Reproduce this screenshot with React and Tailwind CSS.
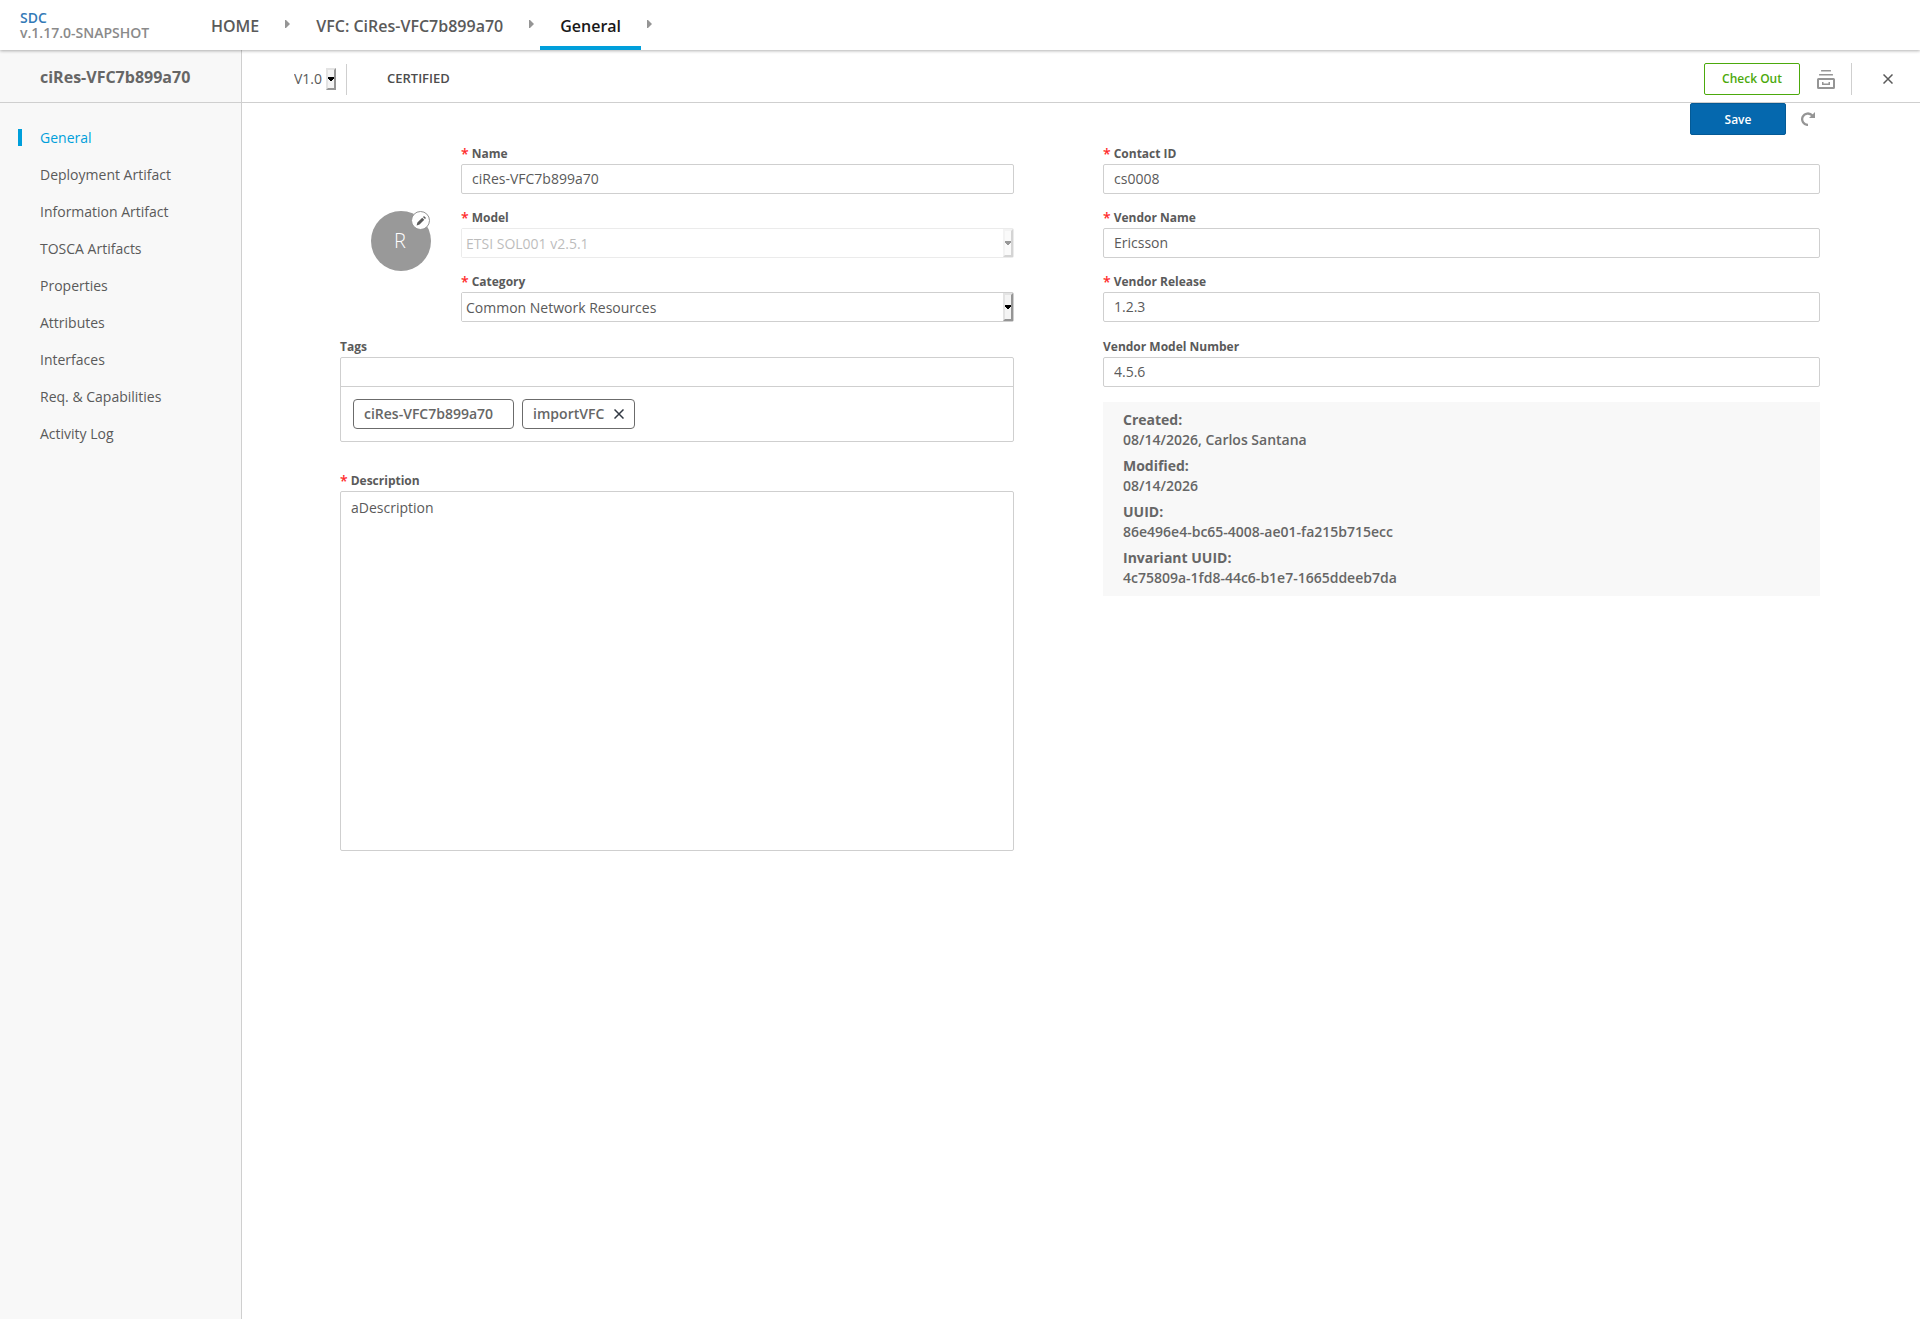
import React from "react";

const MENU = [
  "General",
  "Deployment Artifact",
  "Information Artifact",
  "TOSCA Artifacts",
  "Properties",
  "Attributes",
  "Interfaces",
  "Req. & Capabilities",
  "Activity Log",
];

const INFO = [
  ["Created:", "08/14/2026, Carlos Santana"],
  ["Modified:", "08/14/2026"],
  ["UUID:", "86e496e4-bc65-4008-ae01-fa215b715ecc"],
  ["Invariant UUID:", "4c75809a-1fd8-44c6-b1e7-1665ddeeb7da"],
];

function Arrow() {
  return (
    <svg viewBox="0 0 5 8" className="mx-1.5 mt-5 h-2 w-[5px] shrink-0" aria-hidden="true">
      <path d="M0 0h1l4 4-4 4H0z" fill="#959595" />
    </svg>
  );
}

function Crumb({ active, children }) {
  return (
    <>
      <a
        href="#"
        className={
          active
            ? "h-full border-b-4 border-[#009fdb] px-5 pt-[15px] text-[#191919]"
            : "h-full border-b-4 border-transparent px-5 pt-[15px] text-[#5a5a5a]"
        }
      >
        {children}
      </a>
      <Arrow />
    </>
  );
}

function Label({ id, required, children }) {
  return (
    <label htmlFor={id} className="flex h-[22px] items-center gap-[3px] pt-0.5 text-xs font-bold text-[#5a5a5a]">
      {required && <span className="text-sm leading-4 font-semibold text-[#ff2b2b]">*</span>}
      {children}
    </label>
  );
}

function TextField({ id, label, value, required = true }) {
  return (
    <div>
      <Label id={id} required={required}>{label}</Label>
      <input
        id={id}
        type="text"
        defaultValue={value}
        className="block h-[30px] w-full rounded-xs border border-[#cfcfcf] bg-white px-2.5 pb-0.5 text-sm text-[#5a5a5a]"
      />
    </div>
  );
}

function DropButton() {
  return (
    <span
      aria-hidden="true"
      className="pointer-events-none absolute inset-y-0 right-0 flex w-2.5 items-center justify-center border-2 border-t-[#e3e3e3] border-r-[#959595] border-b-[#959595] border-l-[#e3e3e3] bg-[#f4f4f4]"
    >
      <svg viewBox="0 0 6 4" className="h-1 w-1.5 shrink-0" shapeRendering="crispEdges">
        <path d="M0 0h6v2H5v1H4v1H2V3H1V2H0z" fill="#000" />
      </svg>
    </span>
  );
}

function SelectField({ id, label, value, disabled }) {
  return (
    <div>
      <Label id={id} required>{label}</Label>
      <div
        className={
          disabled
            ? "relative h-[30px] rounded-xs border border-[#cfcfcf] opacity-40"
            : "relative h-[30px] rounded-xs border border-[#cfcfcf]"
        }
      >
        <select
          id={id}
          disabled={disabled}
          className="block h-full w-full appearance-none bg-white pt-0.5 pr-3 pl-1 text-sm text-[#5a5a5a] opacity-100"
        >
          <option>{value}</option>
        </select>
        <DropButton />
      </div>
    </div>
  );
}

function Cross({ className }) {
  return (
    <svg viewBox="0 0 10 10" className={className} aria-hidden="true">
      <path d="M.5.5l9 9M9.5.5l-9 9" stroke="currentColor" strokeWidth="1.5" fill="none" />
    </svg>
  );
}

function Header() {
  return (
    <header className="relative z-10 flex h-[50px] shrink-0 bg-white shadow-[0_1px_3px_rgba(0,0,0,0.3)]">
      <div className="w-[191px] shrink-0 pt-2.5 pl-5 text-sm leading-[15px] font-semibold">
        <a href="#" className="block text-[#337ab7]">SDC</a>
        <div className="text-[#8a8a8a]">v.1.17.0-SNAPSHOT</div>
      </div>
      <nav className="flex text-base leading-[22px] font-semibold">
        <Crumb>HOME</Crumb>
        <Crumb>VFC: CiRes-VFC7b899a70</Crumb>
        <Crumb active>General</Crumb>
      </nav>
    </header>
  );
}

function Sidebar() {
  return (
    <aside className="w-[242px] shrink-0 border-r border-[#cfcfcf] bg-[#f8f8f8]">
      <h1 className="flex h-[53px] items-center border-b border-[#cfcfcf] pt-0.5 pl-10 text-base font-bold text-[#666666]">
        ciRes-VFC7b899a70
      </h1>
      <nav className="pt-4 text-sm">
        {MENU.map((m, i) => (
          <a
            key={m}
            href="#"
            className={
              i === 0
                ? "flex h-[37px] items-center pl-[18px] text-[#009fdb]"
                : "flex h-[37px] items-center pl-[18px] text-[#5a5a5a]"
            }
          >
            <span className={i === 0 ? "mr-[18px] h-[17px] w-1 bg-[#009fdb]" : "mr-[18px] h-[17px] w-1"} />
            {m}
          </a>
        ))}
      </nav>
    </aside>
  );
}

function Toolbar() {
  return (
    <div className="flex h-[53px] items-center border-b border-[#cfcfcf] pt-1.5 pr-[27px] pl-[52px]">
      <div className="relative h-[22px] w-[42px]">
        <select aria-label="Version" className="block h-full w-full appearance-none bg-white text-sm leading-[22px] text-[#5a5a5a]">
          <option>V1.0</option>
        </select>
        <DropButton />
      </div>
      <div className="ml-2.5 h-[31px] w-px bg-[#cfcfcf]" />
      <div className="ml-10 text-[13px] font-semibold text-[#4d4d4d]">CERTIFIED</div>
      <button type="button" className="ml-auto h-8 w-24 rounded-xs border border-[#4ca90c] text-xs font-semibold text-[#4ca90c]">
        Check Out
      </button>
      <button type="button" aria-label="Archive" className="ml-[17px] text-[#959595]">
        <svg viewBox="0 0 18 19" className="block h-[19px] w-[18px]" fill="currentColor">
          <rect x="4" y="0" width="10" height="1.600" rx=".5" />
          <rect x="2" y="4" width="14" height="1.600" rx=".5" />
          <rect x="1" y="9" width="16" height="9" rx=".5" fill="none" stroke="currentColor" strokeWidth="2" />
          <path d="M5 12h1.500v1.500h5V12H13v3H5z" />
        </svg>
      </button>
      <div className="ml-4 h-8 w-px bg-[#cfcfcf]" />
      <button type="button" aria-label="Close" className="ml-[31px] text-[#5a5a5a]">
        <Cross className="block h-2.5 w-2.5" />
      </button>
    </div>
  );
}

function Tag({ children, removable }) {
  return (
    <span className="flex h-[30px] items-center rounded border border-[#6b6b6b] px-2.5 text-sm font-semibold text-[#666666]">
      {children}
      {removable ? (
        <button type="button" aria-label="Remove tag" className="ml-2.5 text-[#323943]">
          <Cross className="block h-2.5 w-2.5" />
        </button>
      ) : (
        <span className="w-2.5" />
      )}
    </span>
  );
}

function Avatar() {
  return (
    <div className="relative mt-[69px] mr-[30px] ml-[31px] flex h-[60px] w-[60px] shrink-0 items-center justify-center rounded-full bg-[#999999] pr-0.5 text-xl font-light text-white">
      R
      <button
        type="button"
        aria-label="Change icon"
        className="absolute top-0 right-px flex h-[19px] w-[19px] items-center justify-center rounded-full border border-[#959595] bg-white text-[#5a5a5a]"
      >
        <svg viewBox="0 0 10 10" className="h-2.5 w-2.5" fill="currentColor">
          <path d="M.6 9.400l.8-2.900L6.200 1.700l2.100 2.100L3.500 8.600zM6.900 1l.6-.6q.5-.4 1 0l1.100 1.100q.4.5 0 1l-.6.6z" />
        </svg>
      </button>
    </div>
  );
}

export default function App() {
  return (
    <div className="flex min-h-screen flex-col bg-white font-['Open_Sans',sans-serif]">
      <Header />
      <div className="flex flex-1">
        <Sidebar />
        <main className="min-w-0 flex-1">
          <Toolbar />
          <div className="flex h-8 items-center justify-end pr-[105px]">
            <button type="button" className="h-8 w-24 rounded-xs border border-[#045a96] bg-[#0568ae] pt-0.5 text-xs font-semibold text-white">
              Save
            </button>
            <button type="button" aria-label="Revert" className="ml-[15px] text-[#959595]">
              <svg viewBox="0 0 14 14" className="block h-3.5 w-3.5" fill="none" stroke="currentColor" strokeWidth="2.300">
                <path d="M7 12.900A5.700 5.700 0 1 1 11.300 3.600" />
                <path d="M14 0v6H8z" fill="currentColor" stroke="none" />
              </svg>
            </button>
          </div>
          <form className="grid grid-cols-[674fr_717fr] gap-x-[89px] pt-[7px] pr-[100px] pl-[98px]">
            <div>
              <div className="flex">
                <Avatar />
                <div className="flex flex-1 flex-col gap-3">
                  <TextField id="name" label="Name" value="ciRes-VFC7b899a70" />
                  <SelectField id="model" label="Model" value="ETSI SOL001 v2.5.1" disabled />
                  <SelectField id="category" label="Category" value="Common Network Resources" />
                </div>
              </div>
              <div className="mt-[13px]">
                <Label id="tags">Tags</Label>
                <div className="rounded-xs border border-[#cfcfcf]">
                  <input id="tags" type="text" className="block h-[29px] w-full border-b border-[#cfcfcf] px-2.5 text-sm" />
                  <div className="flex gap-2 px-3 py-3">
                    <Tag>ciRes-VFC7b899a70</Tag>
                    <Tag removable>importVFC</Tag>
                  </div>
                </div>
              </div>
              <div className="mt-[27px]">
                <Label id="description" required>Description</Label>
                <textarea
                  id="description"
                  defaultValue="aDescription"
                  className="block h-[360px] w-full resize-none rounded-xs border border-[#cfcfcf] px-2.5 py-1.5 text-sm text-[#5a5a5a]"
                />
              </div>
            </div>
            <div>
              <div className="flex flex-col gap-3">
                <TextField id="contact" label="Contact ID" value="cs0008" />
                <TextField id="vendor" label="Vendor Name" value="Ericsson" />
                <TextField id="release" label="Vendor Release" value="1.2.3" />
              </div>
              <div className="mt-[13px]">
                <TextField id="modelNumber" label="Vendor Model Number" value="4.5.6" required={false} />
              </div>
              <dl className="mt-[15px] flex flex-col gap-1.5 bg-[#f8f8f8] px-5 py-2 text-sm leading-5 text-[#666666]">
                {INFO.map(([k, v]) => (
                  <div key={k}>
                    <dt className="font-bold">{k}</dt>
                    <dd className="font-semibold">{v}</dd>
                  </div>
                ))}
              </dl>
            </div>
          </form>
        </main>
      </div>
    </div>
  );
}
